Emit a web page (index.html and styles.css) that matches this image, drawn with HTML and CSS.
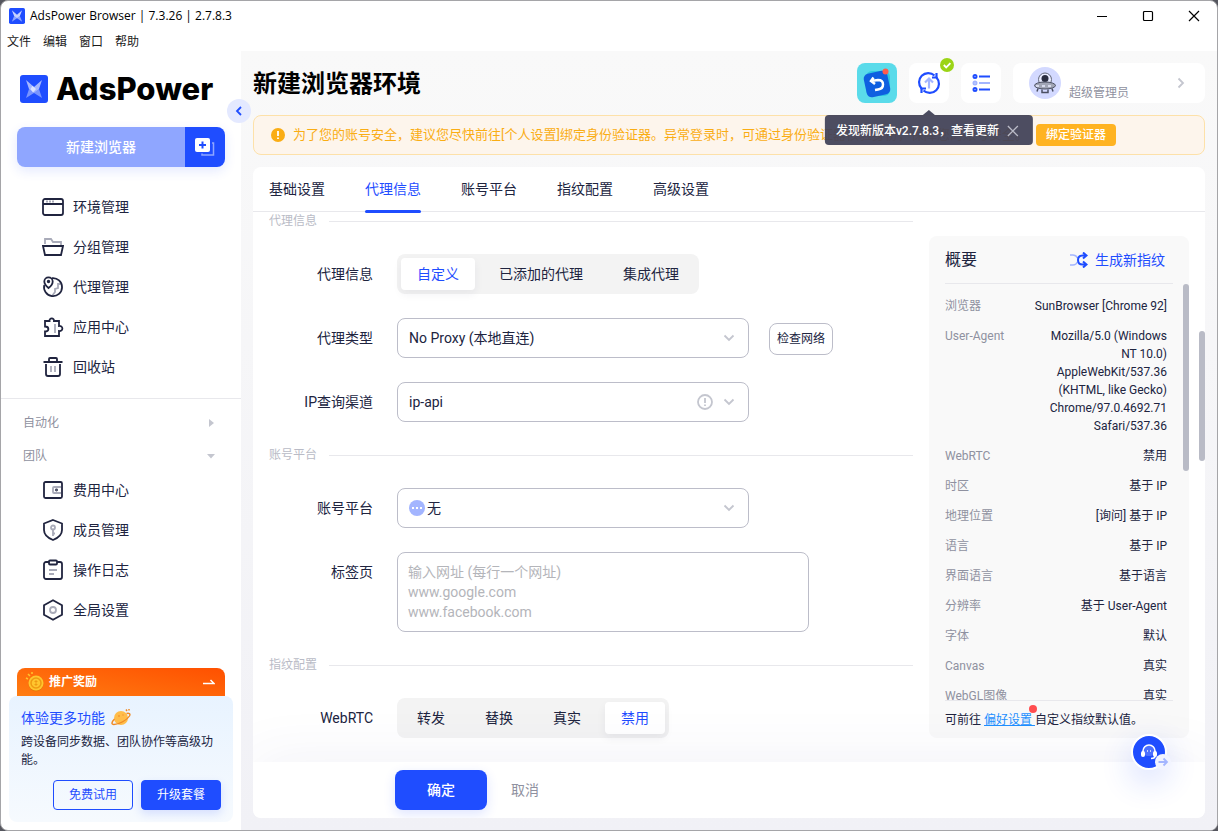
FILE: index.html
```html
<!DOCTYPE html>
<html lang="zh-CN">
<head>
    <meta charset="UTF-8">
    <meta name="viewport" content="width=device-width, initial-scale=1.0">
    <title>AdsPower Browser</title>
    <link rel="stylesheet" href="styles.css">
</head>
<body>
<div class="window">

    <!-- Title bar -->
    <div class="titlebar">
        <svg class="app-icon" viewBox="0 0 28 28">
            <rect width="28" height="28" rx="3" fill="#1f4dff"/>
            <path d="M5 4l9 8v6l-5-4zM23 4l-9 8v6l5-4z" fill="#fff" opacity=".75"/>
            <path d="M9 14l5 4-9 6zM19 14l-5 4 9 6z" fill="#fff" opacity=".5"/>
        </svg>
        <span class="app-title">AdsPower Browser | 7.3.26 | 2.7.8.3</span>
        <div class="win-buttons">
            <button type="button" aria-label="最小化"><svg width="12" height="12" viewBox="0 0 12 12"><path d="M1 6.5h10" stroke="#000"/></svg></button>
            <button type="button" aria-label="最大化"><svg width="12" height="12" viewBox="0 0 12 12"><rect x="1.5" y="1.5" width="9" height="9" rx="1" fill="none" stroke="#000" stroke-width="1.2"/></svg></button>
            <button type="button" aria-label="关闭"><svg width="12" height="12" viewBox="0 0 12 12"><path d="M1 1l10 10M11 1L1 11" stroke="#000" stroke-width="1.2"/></svg></button>
        </div>
    </div>
    <div class="menubar">
        <button type="button">文件</button>
        <button type="button">编辑</button>
        <button type="button">窗口</button>
        <button type="button">帮助</button>
    </div>

    <div class="layout">
        <!-- Sidebar -->
        <aside class="sidebar">
            <button type="button" class="collapse" aria-label="收起"><svg width="10" height="10" viewBox="0 0 10 10"><path d="M7 1L3 5l4 4" fill="none" stroke="#1f4dff" stroke-width="1.8"/></svg></button>

            <div class="logo">
                <svg width="28" height="28" viewBox="0 0 28 28">
                    <rect width="28" height="28" rx="3" fill="#1f4dff"/>
                    <path d="M6 5l8 7v6l-5-4zM22 5l-8 7v6l5-4z" fill="#fff" opacity=".6"/>
                    <path d="M9 14l5 4-8 5zM19 14l-5 4 8 5z" fill="#fff" opacity=".4"/>
                    <path d="M12.500 10.700l3.500 3.300-3 3.500-2.500-3.500z" fill="#fff" opacity=".6"/>
                </svg>
                <span>AdsPower</span>
            </div>

            <div class="new-browser">
                <button type="button" class="new-main">新建浏览器</button>
                <button type="button" class="new-batch" aria-label="批量新建">
                    <svg width="20" height="20" viewBox="0 0 20 20">
                        <path d="M17 6h1.500v12H7v-1.500" fill="none" stroke="#8fa6ff" stroke-width="1.500"/>
                        <rect x="0" y="1" width="15" height="14" rx="2" fill="#fff"/>
                        <path d="M7.500 4.500v7M4 8h7" stroke="#1f4dff" stroke-width="2"/>
                    </svg>
                </button>
            </div>

            <nav class="nav">
                <a href="#"><svg viewBox="0 0 22 22"><rect x="1" y="3" width="20" height="16" rx="2"/><path d="M1 8h20"/><path class="dim" d="M4 5.500h8" stroke-dasharray="2 1"/></svg>环境管理</a>
                <a href="#"><svg viewBox="0 0 22 22"><path class="dim" d="M3 8V3h6l2 3h8v3"/><path d="M1 10h20l-2 9H3z"/></svg>分组管理</a>
                <a href="#"><svg viewBox="0 0 22 22"><path class="dim" d="M19 8h-3v4l-3 1v3l-3 4"/><path d="M10 2.200A9 9 0 1 1 2.300 9"/><path d="M6.500 12C3 9 2.300 7.500 2.300 5.500a4.200 4.200 0 0 1 8.400 0c0 2-.7 4-4.200 6.500z"/><circle cx="6.500" cy="5.500" r=".8"/></svg>代理管理</a>
                <a href="#"><svg viewBox="0 0 22 22"><path class="dim" d="M13 8v9"/><path d="M3 5h4.500c-.5-3.500 5-3.500 4.500 0h5v5c4.500-.5 4.500 5.500 0 5v5H3v-4.500c4.500 0 4.500-5 0-5z"/></svg>应用中心</a>
                <a href="#"><svg viewBox="0 0 22 22"><path class="dim" d="M9 10v6M13 10v6"/><path d="M1.500 6h19M7 6V3q0-1 1-1h6q1 0 1 1v3M4 8v10q0 2 2 2h10q2 0 2-2V8"/></svg>回收站</a>
            </nav>

            <button type="button" class="group group-first">自动化<svg width="8" height="8" viewBox="0 0 8 8"><path d="M2 0l5 4-5 4z" fill="#c4c6cf"/></svg></button>
            <button type="button" class="group">团队<svg width="8" height="8" viewBox="0 0 8 8"><path d="M0 2h8L4 6.500z" fill="#c4c6cf"/></svg></button>

            <nav class="nav">
                <a href="#"><svg viewBox="0 0 22 22"><rect x="2" y="3" width="18" height="16" rx="1.500"/><path class="dim" d="M19 8h-7q-1 0-1 1v4q0 1 1 1h7"/><circle cx="14.500" cy="11" r=".5"/></svg>费用中心</a>
                <a href="#"><svg viewBox="0 0 22 22"><path d="M11 1l9 3.500V11c0 5-4 8-9 10-5-2-9-5-9-10V4.500z"/><circle class="dim" cx="11" cy="8.500" r="2"/><path class="dim" d="M11 10.500V17M11 14.500h2"/></svg>成员管理</a>
                <a href="#"><svg viewBox="0 0 22 22"><rect x="2" y="3" width="18" height="17" rx="2"/><rect x="7" y="1.500" width="8" height="4" rx="1" fill="#fff"/><path class="dim" d="M7 11h8M7 15h5"/></svg>操作日志</a>
                <a href="#"><svg viewBox="0 0 22 22"><path d="M11 1.200l9 5v9.600l-9 5-9-5V6.200z"/><circle class="dim" cx="11" cy="11" r="3"/></svg>全局设置</a>
            </nav>

            <!-- Promotion -->
            <div class="promo">
                <a href="#" class="promo-bar">
                    <svg width="20" height="20" viewBox="0 0 20 20">
                        <circle cx="11" cy="12" r="7.500" fill="#e8790c"/>
                        <circle cx="11" cy="11" r="7.500" fill="#ffc52e"/>
                        <circle cx="11" cy="11" r="5" fill="none" stroke="#ef9a12" stroke-width="1.500"/>
                        <path d="M11 8v6M9.500 9.500h3M9.500 12.500h3" stroke="#ef9a12"/>
                        <path d="M1 6l2 1M3 2l2 2M7 0v2" stroke="#ffc52e" stroke-width="1.500"/>
                    </svg>
                    <strong>推广奖励</strong>
                    <svg class="promo-arrow" width="12" height="8" viewBox="0 0 12 8"><path d="M0 5.500h11L7.500 2" fill="none" stroke="#fff" stroke-width="1.500"/></svg>
                </a>
                <div class="promo-card">
                    <h3>体验更多功能
                        <svg width="20" height="20" viewBox="0 0 20 20">
                            <circle cx="10" cy="10" r="7" fill="#ffbd4a"/>
                            <path d="M3.500 11C.5 14 0 16.500 3 16.500c5 0 13-4.500 15.500-8.500C19.800 5.500 18 5 15.500 5.500" fill="none" stroke="#f08a24" stroke-width="1.400"/>
                            <circle cx="8" cy="8" r="1" fill="#f59a35"/>
                            <circle cx="12" cy="7" r=".8" fill="#f59a35"/>
                            <path d="M15 1.500l1 1.500M18 1v1.500" stroke="#f08a24" stroke-width="1.500"/>
                        </svg>
                    </h3>
                    <p>跨设备同步数据、团队协作等高级功能。</p>
                    <div class="promo-actions">
                        <button type="button" class="btn-outline">免费试用</button>
                        <button type="button" class="btn-upgrade">升级套餐</button>
                    </div>
                </div>
            </div>
        </aside>

        <!-- Main -->
        <main class="main">
            <header class="header">
                <h1>新建浏览器环境</h1>
                <div class="tools">
                    <button type="button" class="tool tool-app" aria-label="同步应用">
                        <svg width="40" height="40" viewBox="0 0 40 40">
                            <rect x="9" y="8" width="24" height="25" rx="6" fill="#2fc8e0"/>
                            <rect x="8" y="9" width="24" height="24" rx="5" fill="#0f5fe0" transform="rotate(-12 20 21)"/>
                            <path d="M14 18l7-1q5 0 5 4.500t-5 5l-3 .5M16.500 14.500L14 18l4 3" fill="none" stroke="#fff" stroke-width="2.500"/>
                            <circle cx="28.500" cy="8.500" r="3" fill="#ff5b4d"/>
                        </svg>
                    </button>
                    <div class="update">
                        <button type="button" class="tool" aria-label="检查更新">
                            <svg width="24" height="24" viewBox="0 0 24 24" fill="none" stroke="#1f4dff" stroke-width="2.200">
                                <path d="M4.500 17.500A9.200 9.200 0 0 1 17.500 4.500M19.500 6.500A9.200 9.200 0 0 1 6.500 19.500"/>
                                <path d="M19.500 2v4.500H15M4.500 22v-4.500H9"/>
                                <path d="M12 17.500V8M8 11.500L12 7.500l4 4" stroke="#a3b5ff"/>
                            </svg>
                        </button>
                        <svg class="update-badge" width="14" height="14" viewBox="0 0 14 14"><circle cx="7" cy="7" r="7" fill="#9bd416"/><path d="M3.800 7l2.400 2.400 4.200-4.200" fill="none" stroke="#fff" stroke-width="1.800"/></svg>
                        <div class="tooltip">
                            <span>发现新版本v2.7.8.3，查看更新</span>
                            <button type="button" aria-label="关闭提示"><svg width="12" height="12" viewBox="0 0 12 12"><path d="M1 1l10 10M11 1L1 11" stroke="#b9bac6" stroke-width="1.300"/></svg></button>
                        </div>
                    </div>
                    <button type="button" class="tool" aria-label="任务列表">
                        <svg width="20" height="20" viewBox="0 0 20 20" fill="none" stroke="#1f4dff" stroke-width="2">
                            <circle cx="4" cy="3.500" r="1.500"/><path d="M8 3.500h11"/>
                            <g stroke="#a3b5ff"><circle cx="4" cy="10" r="1.500"/><path d="M8 10h11"/></g>
                            <circle cx="4" cy="16.500" r="1.500"/><path d="M8 16.500h11"/>
                        </svg>
                    </button>
                    <button type="button" class="user">
                        <svg width="32" height="32" viewBox="0 0 32 32">
                            <circle cx="16" cy="16" r="16" fill="#d3d9ff"/>
                            <circle cx="16" cy="12.500" r="6.500" fill="#e9ecff" stroke="#63687a"/>
                            <circle cx="16" cy="11.500" r="3.500" fill="#2a2d40"/>
                            <path d="M12 17q4-4 8 0z" fill="#777c90"/>
                            <ellipse cx="16" cy="18.500" rx="10.500" ry="3.500" fill="#a2a6b6" stroke="#4b4f62"/>
                            <path d="M7 19h18" stroke="#e9ecff" stroke-width="1.500" stroke-dasharray="3 3"/>
                            <path d="M9 21.500l-1 3M23 21.500l1 3M13 22.500v3h6v-3" fill="none" stroke="#4b4f62" stroke-width="1.500"/>
                        </svg>
                        <span>超级管理员</span>
                        <svg class="user-arrow" width="8" height="12" viewBox="0 0 8 12"><path d="M1.500 1.500L6 6l-4.500 4.500" fill="none" stroke="#c4c6cf" stroke-width="1.800"/></svg>
                    </button>
                </div>
            </header>

            <div class="notice">
                <svg width="14" height="14" viewBox="0 0 14 14"><circle cx="7" cy="7" r="7" fill="#faad14"/><path d="M7 3v5M7 9.500v1.500" stroke="#fff" stroke-width="1.800"/></svg>
                <span>为了您的账号安全，建议您尽快前往[个人设置]绑定身份验证器。异常登录时，可通过身份验证器核验身份，保障您的账号安全。</span>
                <button type="button">绑定验证器</button>
            </div>

            <section class="card">
                <div class="tabs">
                    <a href="#">基础设置</a>
                    <a href="#" class="active">代理信息</a>
                    <a href="#">账号平台</a>
                    <a href="#">指纹配置</a>
                    <a href="#">高级设置</a>
                </div>

                <div class="card-body">
                    <form class="form">
                        <h2 class="section-title">代理信息</h2>
                        <div class="row">
                            <span class="label" id="proxy-label">代理信息</span>
                            <div class="segment" role="radiogroup" aria-labelledby="proxy-label">
                                <label><input type="radio" name="proxy" checked><span>自定义</span></label>
                                <label><input type="radio" name="proxy"><span>已添加的代理</span></label>
                                <label><input type="radio" name="proxy"><span>集成代理</span></label>
                            </div>
                        </div>
                        <div class="row">
                            <label class="label" for="proxy-type">代理类型</label>
                            <div class="select">
                                <select id="proxy-type"><option>No Proxy (本地直连)</option></select>
                                <svg class="chevron" viewBox="0 0 12 12"><path d="M1.500 3.500L6 8l4.500-4.500"/></svg>
                            </div>
                            <button type="button" class="btn-check">检查网络</button>
                        </div>
                        <div class="row">
                            <label class="label" for="ip-channel">IP查询渠道</label>
                            <div class="select">
                                <select id="ip-channel"><option>ip-api</option></select>
                                <svg class="select-info" viewBox="0 0 16 16"><circle cx="8" cy="8" r="7"/><path d="M8 4v5M8 10.500V12"/></svg>
                                <svg class="chevron" viewBox="0 0 12 12"><path d="M1.500 3.500L6 8l4.500-4.500"/></svg>
                            </div>
                        </div>

                        <h2 class="section-title">账号平台</h2>
                        <div class="row">
                            <label class="label" for="platform">账号平台</label>
                            <div class="select select-icon">
                                <svg class="platform-dot" viewBox="0 0 16 16"><circle cx="8" cy="8" r="8" fill="#a3b5ff"/><path d="M3 8h2M7 8h2M11 8h2" stroke="#fff" stroke-width="2"/></svg>
                                <select id="platform"><option>无</option></select>
                                <svg class="chevron" viewBox="0 0 12 12"><path d="M1.500 3.500L6 8l4.500-4.500"/></svg>
                            </div>
                        </div>
                        <div class="row">
                            <label class="label" for="tabs-input">标签页</label>
                            <textarea id="tabs-input" class="textarea" placeholder="输入网址 (每行一个网址)&#10;www.google.com&#10;www.facebook.com"></textarea>
                        </div>

                        <h2 class="section-title">指纹配置</h2>
                        <div class="row">
                            <span class="label" id="rtc-label">WebRTC</span>
                            <div class="segment" role="radiogroup" aria-labelledby="rtc-label">
                                <label><input type="radio" name="rtc"><span>转发</span></label>
                                <label><input type="radio" name="rtc"><span>替换</span></label>
                                <label><input type="radio" name="rtc"><span>真实</span></label>
                                <label><input type="radio" name="rtc" checked><span>禁用</span></label>
                            </div>
                        </div>
                    </form>

                    <!-- Summary -->
                    <aside class="summary">
                        <div class="summary-head">
                            <h2>概要</h2>
                            <button type="button">
                                <svg width="18" height="16" viewBox="0 0 18 16" fill="none" stroke="#1f4dff" stroke-width="2">
                                    <path d="M0 3h3q3 0 4.500 3M0 13h3q3 0 4.500-3" stroke="#a3b5ff" stroke-width="1.500"/>
                                    <path d="M16 3.500h-3.500Q8 3.500 8 8t4.500 4.500H16M13 .5l3.500 3-3.500 3M13 9.500l3.500 3-3.500 3"/>
                                </svg>
                                生成新指纹
                            </button>
                        </div>
                        <dl class="summary-list">
                            <div><dt>浏览器</dt><dd>SunBrowser [Chrome 92]</dd></div>
                            <div><dt>User-Agent</dt><dd class="ua">Mozilla/5.0 (Windows NT 10.0) AppleWebKit/537.36 (KHTML, like Gecko) Chrome/97.0.4692.71 Safari/537.36</dd></div>
                            <div><dt>WebRTC</dt><dd>禁用</dd></div>
                            <div><dt>时区</dt><dd>基于 IP</dd></div>
                            <div><dt>地理位置</dt><dd>[询问] 基于 IP</dd></div>
                            <div><dt>语言</dt><dd>基于 IP</dd></div>
                            <div><dt>界面语言</dt><dd>基于语言</dd></div>
                            <div><dt>分辨率</dt><dd>基于 User-Agent</dd></div>
                            <div><dt>字体</dt><dd>默认</dd></div>
                            <div><dt>Canvas</dt><dd>真实</dd></div>
                            <div><dt>WebGL图像</dt><dd>真实</dd></div>
                        </dl>
                        <p class="summary-foot">可前往 <a href="#">偏好设置 </a>自定义指纹默认值。</p>
                        <span class="thumb thumb-summary"></span>
                    </aside>
                    <span class="thumb thumb-page"></span>
                </div>

                <div class="card-footer">
                    <button type="button" class="btn-ok">确定</button>
                    <button type="button" class="btn-cancel">取消</button>
                </div>
            </section>
        </main>
    </div>

    <button type="button" class="help" aria-label="在线客服">
        <svg width="20" height="20" viewBox="0 0 20 20">
            <rect x="5" y="4" width="10" height="10" rx="4" fill="#4d70ff"/>
            <path d="M4 11V9a6 6 0 0 1 12 0v5q0 2.500-4 2.500" fill="none" stroke="#fff" stroke-width="1.600"/>
            <rect x="2" y="9" width="4" height="6" rx="2" fill="#fff"/>
            <rect x="14" y="9" width="4" height="6" rx="2" fill="#fff"/>
            <path d="M8.500 8v2M11.500 8v2" stroke="#c3cfff"/>
        </svg>
        <svg class="help-arrow" width="16" height="16" viewBox="0 0 16 16"><circle cx="8" cy="8" r="8" fill="#f2f4ff"/><path d="M3.500 8H12M8.500 4.500L12 8l-3.500 3.500" fill="none" stroke="#a3b5ff" stroke-width="1.800"/></svg>
    </button>
</div>
</body>
</html>
```
FILE: styles.css
```css
* {
    box-sizing: border-box;
}

body {
    margin: 0;
    background-color: #55565e;
    color: #20243f;
    font-family: Roboto, "Noto Sans CJK SC", sans-serif;
    font-size: 14px;
    line-height: 20px;
}

button, select, textarea {
    font: inherit;
    color: inherit;
}

button {
    border: none;
    background: none;
    padding: 0;
    cursor: pointer;
    white-space: nowrap;
}

a {
    color: inherit;
    text-decoration: none;
}

h1, h2, h3, p, dl, dd {
    margin: 0;
}

svg {
    flex: none;
    display: block;
}

.window {
    position: relative;
    display: flex;
    flex-direction: column;
    height: 100vh;
    border: 1px solid #a5a5a8;
    border-radius: 8px;
    background-color: #fff;
    overflow: hidden;
}

/* Title bar and menu */
.titlebar {
    display: flex;
    align-items: center;
    height: 30px;
    padding-left: 8px;
    color: #000;
    font-family: "Open Sans", sans-serif;
    font-size: 12px;
}

.app-icon {
    width: 16px;
    height: 16px;
    margin-right: 5px;
}

.win-buttons {
    display: flex;
    margin-left: auto;
}

.win-buttons button {
    display: flex;
    align-items: center;
    justify-content: center;
    width: 46px;
    height: 30px;
}

.menubar {
    display: flex;
    gap: 12px;
    height: 20px;
    padding-left: 6px;
    font-size: 12px;
    line-height: 22px;
    color: #1a1a1a;
}

.layout {
    flex: 1;
    display: flex;
    min-height: 0;
}

/* Sidebar */
.sidebar {
    position: relative;
    z-index: 1;
    display: flex;
    flex-direction: column;
    flex: none;
    width: 240px;
    padding: 24px 8px 8px;
}

.collapse {
    position: absolute;
    top: 48px;
    right: -10px;
    display: flex;
    align-items: center;
    justify-content: center;
    width: 24px;
    height: 24px;
    border-radius: 50%;
    background-color: #e4e9ff;
}

.logo {
    display: flex;
    align-items: center;
    gap: 8px;
    height: 28px;
    padding-left: 11px;
    color: #000;
    font-family: Inter, sans-serif;
    font-size: 31px;
    font-weight: 800;
}

.new-browser {
    display: flex;
    height: 40px;
    margin: 24px 8px 20px;
    border-radius: 8px;
    overflow: hidden;
    color: #fff;
    box-shadow: 0 4px 12px rgba(31, 77, 255, 0.12);
}

.new-main {
    flex: 1;
    background-color: #8fa6ff;
    font-weight: 500;
}

.new-batch {
    display: flex;
    align-items: center;
    justify-content: center;
    width: 40px;
    background-color: #1f4dff;
}

.nav {
    display: flex;
    flex-direction: column;
}

.nav a {
    display: flex;
    align-items: center;
    gap: 9px;
    height: 40px;
    padding-left: 33px;
}

.nav svg {
    width: 22px;
    height: 22px;
    fill: none;
    stroke: #20243f;
    stroke-width: 1.8;
}

.nav .dim {
    stroke: #a9abb9;
}

.group {
    display: flex;
    align-items: center;
    justify-content: space-between;
    height: 31px;
    padding: 2px 18px 0 14px;
    color: #8f91a0;
    font-size: 12px;
}

.group-first {
    height: 41px;
    margin: 11px -8px 0;
    padding: 8px 26px 0 22px;
    border-top: 1px solid #e8e8ec;
}

.promo {
    margin-top: auto;
}

.promo-bar {
    display: flex;
    align-items: center;
    gap: 4px;
    height: 28px;
    margin: 0 8px;
    padding: 0 10px 0 8px;
    border-radius: 8px 8px 0 0;
    background: linear-gradient(190deg, #ff5000, #ff7d12);
    color: #fff;
    font-size: 12px;
}

.promo-arrow {
    margin-left: auto;
}

.promo-card {
    padding: 12px;
    border-radius: 8px;
    background: linear-gradient(#e8f3ff, #f6fafe);
    font-size: 12px;
    line-height: 18px;
}

.promo-card h3 {
    display: flex;
    align-items: center;
    gap: 6px;
    height: 20px;
    margin-bottom: 5px;
    color: #1f4dff;
    font-size: 14px;
    font-weight: 400;
}

.promo-actions {
    display: flex;
    justify-content: flex-end;
    gap: 8px;
    margin-top: 11px;
}

.promo-actions button {
    width: 80px;
    height: 30px;
    border: 1px solid #1f4dff;
    border-radius: 4px;
}

.btn-outline {
    color: #1f4dff;
}

.btn-upgrade {
    background-color: #1f4dff;
    color: #fff;
    box-shadow: 0 4px 10px rgba(31, 77, 255, 0.15);
}

/* Main */
.main {
    flex: 1;
    display: flex;
    flex-direction: column;
    gap: 12px;
    min-width: 0;
    padding: 12px;
    background: linear-gradient(#f9f9f9, #f1f1f6);
}

.header {
    display: flex;
    align-items: center;
    justify-content: space-between;
    height: 40px;
}

.header h1 {
    padding-top: 2px;
    color: #000;
    font-size: 24px;
    line-height: 32px;
    font-weight: 700;
}

.tools {
    display: flex;
    gap: 12px;
}

.tool {
    display: flex;
    align-items: center;
    justify-content: center;
    width: 40px;
    height: 40px;
    border-radius: 8px;
    background-color: #fff;
}

.tool-app {
    background-color: #5adbea;
}

.update {
    position: relative;
}

.update-badge {
    position: absolute;
    top: -5px;
    right: -5px;
}

.tooltip {
    position: absolute;
    z-index: 2;
    top: 52px;
    left: 50%;
    display: flex;
    align-items: center;
    gap: 8px;
    height: 30px;
    padding: 2px 14px 0 11px;
    border-radius: 4px;
    background-color: rgba(66, 66, 88, 0.94);
    color: #fff;
    font-size: 12px;
    font-weight: 500;
    white-space: nowrap;
    transform: translateX(-50%);
}

.tooltip::before {
    content: "";
    position: absolute;
    top: -5px;
    left: 50%;
    margin-left: -6px;
    border: 6px solid transparent;
    border-top: none;
    border-bottom: 5px solid #4b4c60;
}

.user {
    display: flex;
    align-items: center;
    gap: 8px;
    width: 192px;
    height: 40px;
    padding: 0 20px 0 16px;
    border-radius: 8px;
    background-color: #fff;
    color: #8f91a0;
    font-size: 12px;
}

.user span {
    padding-top: 20px;
}

.user-arrow {
    margin-left: auto;
}

.notice {
    display: flex;
    align-items: center;
    gap: 8px;
    height: 40px;
    padding: 0 17px;
    border: 1px solid #fde1a9;
    border-radius: 8px;
    background-color: #fdf5ec;
    color: #faad14;
    font-size: 13px;
    white-space: nowrap;
}

.notice button {
    width: 80px;
    height: 22px;
    border-radius: 4px;
    background-color: #ffb321;
    color: #fff;
    font-size: 12px;
    font-weight: 500;
}

.card {
    flex: 1;
    display: flex;
    flex-direction: column;
    min-height: 0;
    border-radius: 8px;
    background-color: #fff;
    overflow: hidden;
}

.tabs {
    display: flex;
    flex: none;
    gap: 40px;
    height: 45px;
    padding: 0 16px;
    border-bottom: 1px solid #e8e8ec;
}

.tabs a {
    position: relative;
    line-height: 44px;
}

.tabs .active {
    color: #1f4dff;
}

.tabs .active::after {
    content: "";
    position: absolute;
    z-index: 1;
    left: 0;
    right: 0;
    bottom: -2px;
    height: 3px;
    border-radius: 2px;
    background-color: #1f4dff;
}

.card-body {
    position: relative;
    flex: 1;
    display: flex;
    gap: 16px;
    min-height: 0;
    padding: 0 16px;
    overflow: hidden;
}

.form {
    flex: 1;
    min-width: 0;
}

.section-title {
    display: flex;
    align-items: center;
    gap: 12px;
    height: 18px;
    margin-bottom: 24px;
    color: #b9bbc6;
    font-size: 12px;
    font-weight: 400;
}

.section-title::after {
    content: "";
    flex: 1;
    height: 1px;
    background-color: #e8e8ec;
}

.row {
    display: flex;
    margin-bottom: 24px;
}

.label {
    flex: none;
    width: 104px;
    margin-right: 24px;
    line-height: 40px;
    text-align: right;
}

.segment {
    display: flex;
    gap: 8px;
    padding: 4px;
    border-radius: 8px;
    background-color: #f3f3f3;
}

.segment label {
    position: relative;
}

.segment input {
    position: absolute;
    opacity: 0;
    margin: 0;
}

.segment span {
    display: block;
    padding: 0 16px;
    border-radius: 4px;
    line-height: 32px;
    cursor: pointer;
}

.segment input:checked + span {
    background-color: #fff;
    color: #1f4dff;
    box-shadow: 0 4px 10px rgba(32, 36, 63, 0.06);
}

.select {
    position: relative;
    width: 352px;
    height: 40px;
}

.select select {
    width: 100%;
    height: 100%;
    padding: 0 40px 0 11px;
    border: 1px solid #bcbdc9;
    border-radius: 8px;
    background-color: #fff;
    appearance: none;
}

.select-icon select {
    padding-left: 29px;
}

.chevron, .select-info, .platform-dot {
    position: absolute;
    top: 12px;
    width: 16px;
    height: 16px;
    pointer-events: none;
}

.chevron, .select-info {
    fill: none;
    stroke: #c4c6cf;
    stroke-width: 1.8;
}

.chevron {
    top: 14px;
    right: 14px;
    width: 12px;
    height: 12px;
}

.select-info {
    right: 36px;
}

.platform-dot {
    left: 12px;
}

.btn-check {
    align-self: flex-end;
    width: 64px;
    height: 32px;
    margin: 0 0 3px 20px;
    border: 1px solid #bcbdc9;
    border-radius: 8px;
    font-size: 12px;
}

.textarea {
    width: 412px;
    height: 80px;
    padding: 9px 10px;
    border: 1px solid #bcbdc9;
    border-radius: 8px;
    resize: none;
}

.textarea::placeholder {
    color: #b4b5ba;
}

/* Summary panel */
.summary {
    position: relative;
    display: flex;
    flex-direction: column;
    flex: none;
    width: 260px;
    margin: 24px 0;
    padding: 0 16px;
    border-radius: 8px;
    background-color: #f9f9f9;
    font-size: 12px;
    line-height: 18px;
}

.summary-head {
    display: flex;
    align-items: center;
    justify-content: space-between;
    flex: none;
    height: 48px;
    padding-right: 8px;
    border-bottom: 1px solid #e8e8ec;
}

.summary-head h2 {
    font-size: 16px;
    line-height: 20px;
    font-weight: 400;
}

.summary-head button {
    display: flex;
    align-items: center;
    gap: 7px;
    color: #1f4dff;
    font-size: 14px;
}

.summary-list {
    flex: 1;
    min-height: 0;
    padding: 13px 6px 0 0;
    overflow: hidden;
}

.summary-list div {
    display: flex;
    justify-content: space-between;
    margin-bottom: 12px;
}

.summary-list dt {
    color: #8f91a0;
}

.summary-list dd {
    text-align: right;
    white-space: nowrap;
}

.summary-list .ua {
    width: 124px;
    white-space: normal;
}

.summary-foot {
    flex: none;
    height: 38px;
    border-top: 1px solid #e8e8ec;
    line-height: 38px;
}

.summary-foot a {
    position: relative;
    color: #1e90ff;
    text-decoration: underline;
}

/* unread dot on the preferences link */
.summary-foot a::after {
    content: "";
    position: absolute;
    top: -8px;
    right: -2px;
    width: 8px;
    height: 8px;
    border-radius: 50%;
    background-color: #ff4d4f;
}

.thumb {
    position: absolute;
    right: 0;
    width: 6px;
    border-radius: 3px;
    background-color: #b9bbc6;
}

.thumb-summary {
    top: 48px;
    height: 187px;
}

.thumb-page {
    top: 119px;
    height: 130px;
}

.card-footer {
    position: relative;
    display: flex;
    align-items: center;
    flex: none;
    gap: 24px;
    height: 56px;
    padding-left: 142px;
    background-color: #fff;
    box-shadow: 0 0 60px rgba(60, 70, 140, 0.08);
}

.btn-ok {
    width: 92px;
    height: 40px;
    border-radius: 8px;
    background-color: #1f4dff;
    color: #fff;
    font-weight: 500;
    box-shadow: 0 4px 12px rgba(31, 77, 255, 0.15);
}

.btn-cancel {
    color: #8f91a0;
}

/* Support button */
.help {
    position: absolute;
    z-index: 3;
    right: 50px;
    bottom: 60px;
    display: flex;
    align-items: center;
    justify-content: center;
    width: 36px;
    height: 36px;
    border: 2px solid #fff;
    border-radius: 50%;
    background-color: #1f4dff;
    box-shadow: 0 12px 32px rgba(31, 77, 255, 0.2);
}

.help-arrow {
    position: absolute;
    right: -6px;
    bottom: -2px;
}
```
